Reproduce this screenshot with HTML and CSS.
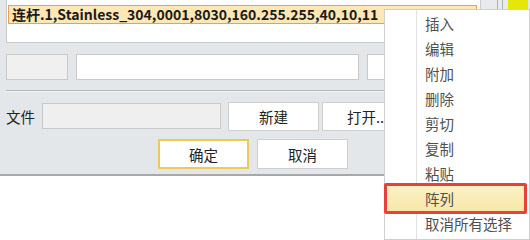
FILE: index.html
```html
<!DOCTYPE html>
<html>
<head>
<meta charset="utf-8">
<link rel="stylesheet" href="styles.css">
</head>
<body>
<div class="dialog">
  <div class="toprow">
    <div class="list">
      <div class="sel">连杆.1,Stainless_304,0001,8030,160.255.255,40,10,11</div>
    </div>
    <div class="scroll"><span></span><span></span></div>
    <div class="yellow"></div>
  </div>
  <div class="row2">
    <div class="box small"></div>
    <div class="box input"></div>
    <div class="box third"></div>
  </div>
  <div class="sep"></div>
  <div class="row3">
    <span class="label">文件</span>
    <div class="box file"></div>
    <div class="btn">新建</div>
    <div class="btn open">打开...</div>
  </div>
  <div class="row4">
    <div class="btn ok">确定</div>
    <div class="btn">取消</div>
  </div>
</div>
<div class="menu">
  <div class="gutter"></div>
  <div class="item">插入</div>
  <div class="item">编辑</div>
  <div class="item">附加</div>
  <div class="item">删除</div>
  <div class="item">剪切</div>
  <div class="item">复制</div>
  <div class="item">粘贴</div>
  <div class="item hl">阵列</div>
  <div class="item">取消所有选择</div>
</div>
</body>
</html>
```
FILE: styles.css
```css
html, body { margin: 0; padding: 0; background: #fff; }
body {
  width: 530px; height: 240px; overflow: hidden; position: relative;
  font-family: "Noto Sans CJK SC", "Noto Sans", sans-serif;
  font-size: 14px; color: #222;
}
.dialog {
  background: #e4e7ea;
  height: 174px;
  border-bottom: 2px solid #a8a8a8;
  padding-left: 6px;
  box-sizing: content-box;
}
.toprow { display: flex; height: 43px; }
.list {
  flex: 1; background: #fff;
  border-left: 1px solid #c8c8c8; border-bottom: 1px solid #c8c8c8;
  box-sizing: border-box; padding: 5px 0 0 1px;
}
.sel {
  height: 19px; box-sizing: border-box;
  background: #fde7b4; border: 1px solid #ee9d55;
  font-weight: 600; font-size: 14px; line-height: 17px;
  padding-left: 3px; color: #1a1a1a; white-space: nowrap; overflow: hidden;
  margin-right: 3px;
}
.scroll {
  width: 28px; background: #e8eaed; display: flex; justify-content: flex-end; gap: 4px;
  padding-right: 5px; box-sizing: border-box; border-left: 1px solid #ccc;
}
.scroll span { width: 1px; background: #b0b0b0; }
.yellow { width: 20px; background: #e6e60a; margin-right: 2px; }
.row2 { display: flex; margin-top: 11px; height: 26px; gap: 8px; }
.box { border: 1px solid #c9c9c9; box-sizing: border-box; }
.small { width: 62px; background: #f0f0f0; }
.input { width: 283px; background: #fff; }
.third { flex: 1; background: #fff; }
.sep { margin-top: 10px; height: 1px; background: #b4b4b4; border-bottom: 1px solid #f4f4f4; }
.row3 { display: flex; align-items: center; margin-top: 9px; height: 30px; }
.label { width: 36px; font-size: 14.5px; color: #222; }
.file { width: 179px; height: 26px; background: #efefef; }
.btn {
  width: 91px; height: 30px; box-sizing: border-box;
  background: #fff; border: 1px solid #cfcfcf;
  display: flex; align-items: center; justify-content: center;
  font-size: 14.5px; color: #222;
}
.row3 .btn { margin-left: 7px; height: 29px; }
.row3 .btn.open { margin-left: 3px; }
.row4 { display: flex; margin-top: 8px; padding-left: 152px; gap: 8px; }
.ok { border: 2px solid #efc85a; }
.menu {
  position: absolute; left: 384px; top: 9px; width: 146px; height: 231px;
  background: #fff; border: 1px solid #cfcfcf; box-sizing: border-box;
  padding-top: 1px;
}
.gutter { position: absolute; left: 31px; top: 0; bottom: 0; width: 1px; background: #e2e2e2; }
.item {
  height: 25px; line-height: 25px; padding-left: 40px;
  color: #505050; font-size: 14.5px; position: relative;
}
.item.hl {
  background: linear-gradient(#fdf1c6, #f7e7a8);
  margin-left: 2px; margin-right: 4px; padding-left: 38px;
}
.item.hl::after {
  content: ""; position: absolute; left: -3px; right: -2px; top: -3px; bottom: -3px;
  border: 3px solid #e8403c; border-radius: 2px;
}
```
